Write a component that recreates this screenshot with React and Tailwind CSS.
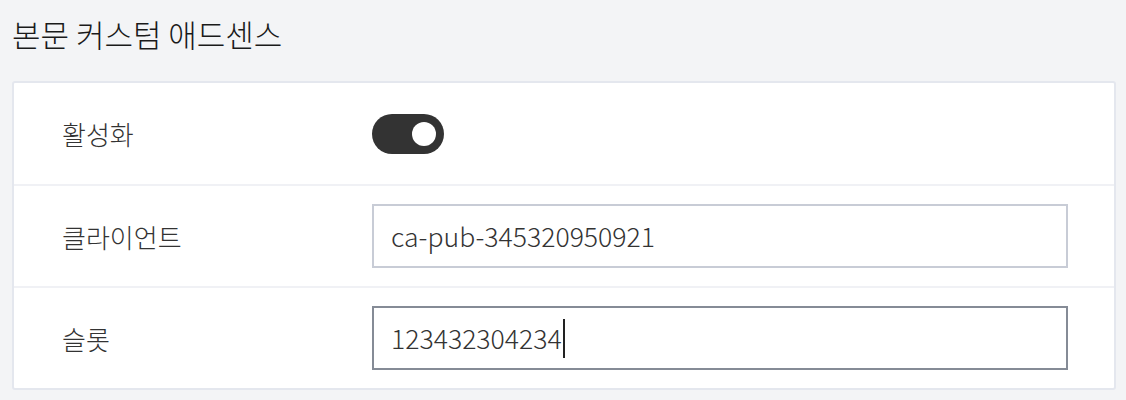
export default function App() {
  return (
    <div className="min-h-[400px] w-[1126px] bg-[#f3f4f6] pt-[14px] font-['Noto_Sans_CJK_KR','Noto_Sans',sans-serif] font-light">
      <h2 className="pl-[12px] text-[31px] leading-[40px] font-light text-[#1a1a1a]">본문 커스텀 애드센스</h2>
      <div className="ml-3 mt-[27px] w-[1104px] rounded-[3px] border-2 border-[#e4e7ee] bg-white">
        <div className="flex h-[103px] items-center border-b-2 border-[#f0f1f5]">
          <div className="w-[358px] pl-[48px] text-[26px] text-[#333]">활성화</div>
          <div className="flex h-[40px] w-[72px] items-center justify-end rounded-full bg-[#333] pr-2">
            <div className="h-6 w-6 rounded-full bg-white" />
          </div>
        </div>
        <div className="flex h-[102px] items-center border-b-2 border-[#f0f1f5]">
          <div className="w-[358px] pl-[48px] text-[26px] text-[#333]">클라이언트</div>
          <div className="flex h-[64px] w-[696px] items-center border-2 border-[#c8ccd6] pl-[17px] text-[26.6px] text-[#333]">
            ca-pub-345320950921
          </div>
        </div>
        <div className="flex h-[100px] items-center">
          <div className="w-[358px] pl-[48px] text-[26px] text-[#333]">슬롯</div>
          <div className="flex h-[64px] w-[696px] items-center border-2 border-[#858b96] pl-[17px] text-[26.6px] text-[#333]">
            <span>123432304234</span>
            <span className="ml-px h-[39px] w-[2px] bg-[#222]" />
          </div>
        </div>
      </div>
    </div>
  );
}
